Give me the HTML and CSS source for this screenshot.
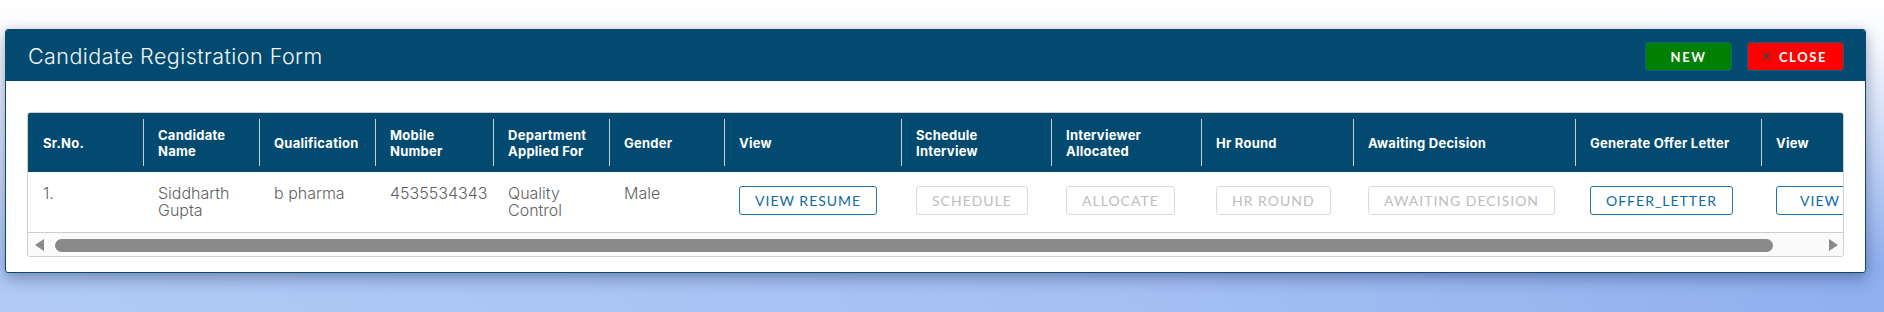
FILE: index.html
```html
<!DOCTYPE html>
<html lang="en">
<head>
    <meta charset="UTF-8">
    <title>Candidate Registration Form</title>
    <link rel="stylesheet" href="styles.css">
</head>
<body>
    <div class="modal">
        <div class="modal-header">
            <h2 class="modal-title">Candidate Registration Form</h2>
            <div class="header-actions">
                <button class="hdr-btn btn-new">NEW</button>
                <button class="hdr-btn btn-close">
                    <svg class="close-icon" width="9" height="9" viewBox="0 0 9 9">
                        <path d="M1 1 L8 8 M8 1 L1 8" stroke="#39434b" stroke-width="1.4" fill="none"/>
                    </svg>
                    CLOSE
                </button>
            </div>
        </div>

        <div class="modal-body">
            <div class="table-wrap">
                <div class="table-clip">
                    <table class="grid">
                        <colgroup>
                            <col style="width:115px">
                            <col style="width:116px">
                            <col style="width:116px">
                            <col style="width:118px">
                            <col style="width:116px">
                            <col style="width:115px">
                            <col style="width:177px">
                            <col style="width:150px">
                            <col style="width:150px">
                            <col style="width:152px">
                            <col style="width:222px">
                            <col style="width:186px">
                            <col style="width:140px">
                        </colgroup>
                        <thead>
                            <tr>
                                <th class="first">Sr.No.</th>
                                <th>Candidate<br>Name</th>
                                <th>Qualification</th>
                                <th>Mobile<br>Number</th>
                                <th>Department<br>Applied For</th>
                                <th>Gender</th>
                                <th>View</th>
                                <th>Schedule<br>Interview</th>
                                <th>Interviewer<br>Allocated</th>
                                <th>Hr Round</th>
                                <th>Awaiting Decision</th>
                                <th>Generate Offer Letter</th>
                                <th>View</th>
                            </tr>
                        </thead>
                        <tbody>
                            <tr>
                                <td>1.</td>
                                <td>Siddharth Gupta</td>
                                <td>b pharma</td>
                                <td>4535534343</td>
                                <td>Quality Control</td>
                                <td>Male</td>
                                <td><button class="row-btn">View Resume</button></td>
                                <td><button class="row-btn" disabled>Schedule</button></td>
                                <td><button class="row-btn" disabled>Allocate</button></td>
                                <td><button class="row-btn" disabled>Hr Round</button></td>
                                <td><button class="row-btn" disabled>Awaiting Decision</button></td>
                                <td><button class="row-btn">Offer_Letter</button></td>
                                <td><button class="row-btn">View</button></td>
                            </tr>
                        </tbody>
                    </table>
                </div>
                <!-- horizontal scroll bar -->
                <div class="hscroll">
                    <svg class="arrow" width="9" height="12" viewBox="0 0 9 12"><polygon points="9,0 9,12 0,6" fill="#8a8a8a"/></svg>
                    <div class="thumb"></div>
                    <svg class="arrow arrow-right" width="9" height="12" viewBox="0 0 9 12"><polygon points="0,0 0,12 9,6" fill="#8a8a8a"/></svg>
                </div>
            </div>
        </div>
    </div>
</body>
</html>
```

FILE: styles.css
```css
* {
    box-sizing: border-box;
}
html, body {
    height: 100%;
}
body {
    margin: 0;
    padding: 29px 18px 0 5px;
    font-family: 'Inter', 'Lato', 'Liberation Sans', sans-serif;
    background:
        linear-gradient(to bottom, #ffffff 0%, rgba(255, 255, 255, 0.92) 15%, rgba(255, 255, 255, 0) 85%),
        linear-gradient(to right, #b1cbf6 0%, #a4c0f3 60%, #8fafee 100%);
}
.modal {
    background: #fff;
    border: 1px solid #0b4a6c;
    border-radius: 3px;
    box-shadow: 0 6px 16px rgba(20, 40, 90, 0.35), 0 0 12px rgba(0, 0, 0, 0.08);
    overflow: hidden;
}
.modal-header {
    height: 51px;
    background: #024a6f;
    display: flex;
    align-items: center;
    justify-content: space-between;
    padding: 0 21px 0 22px;
}
.modal-title {
    margin: 0;
    font-size: 21.5px;
    font-weight: 300;
    letter-spacing: 0.45px;
    color: #f2f6f9;
}
.header-actions {
    display: flex;
    gap: 15px;
    padding-top: 2px;
}
.hdr-btn {
    height: 29px;
    border: 1px solid #1b5d7e;
    border-radius: 3px;
    color: #fff;
    font-family: 'Lato', 'Liberation Sans', sans-serif;
    font-size: 13px;
    font-weight: 700;
    letter-spacing: 1.6px;
    display: flex;
    align-items: center;
    justify-content: center;
    cursor: pointer;
}
.btn-new {
    width: 87px;
    background: #008000;
}
.btn-close {
    width: 97px;
    background: #ff0000;
    gap: 8px;
    padding-left: 4px;
}
.modal-body {
    padding: 31px 21px 15px 21px;
}
.table-wrap {
    border: 1px solid #cfcfcf;
    border-radius: 3px;
    overflow: hidden;
}
.table-clip {
    overflow: hidden;
}
.grid {
    border-collapse: separate;
    border-spacing: 0;
    table-layout: fixed;
    width: 1873px;
}
.grid th {
    height: 59px;
    padding: 0 15px;
    background-color: #024a6f;
    background-image: linear-gradient(#c4cfd7, #c4cfd7);
    background-repeat: no-repeat;
    background-position: left center;
    background-size: 1px 47px;
    color: #fff;
    font-size: 13px;
    font-weight: 700;
    letter-spacing: 0.25px;
    line-height: 16px;
    text-align: left;
    white-space: nowrap;
    vertical-align: middle;
}
.grid th.first {
    background-image: none;
}
.grid td {
    padding: 13px 15px;
    border-bottom: 1px solid #cccccc;
    color: #5f5f5f;
    font-size: 16px;
    font-weight: 300;
    line-height: 17px;
    vertical-align: top;
}
.row-btn {
    margin-top: 1px;
    height: 29px;
    min-width: 88px;
    padding: 0 15px;
    background: #fff;
    border: 1px solid #1f73a6;
    border-radius: 3px;
    color: #0e6aa3;
    font-family: 'Lato', 'Liberation Sans', sans-serif;
    font-size: 14px;
    font-weight: 400;
    letter-spacing: 1px;
    text-transform: uppercase;
    white-space: nowrap;
    cursor: pointer;
}
.row-btn:disabled {
    border-color: #dadada;
    color: #bdbdbd;
    cursor: default;
}
.hscroll {
    height: 23px;
    background: #fafafa;
    display: flex;
    align-items: center;
    padding: 1px 5px 0 7px;
}
.thumb {
    width: 1718px;
    height: 13px;
    margin-left: 11px;
    background: #8a8a8a;
    border-radius: 7px;
}
.arrow-right {
    margin-left: auto;
}
```
